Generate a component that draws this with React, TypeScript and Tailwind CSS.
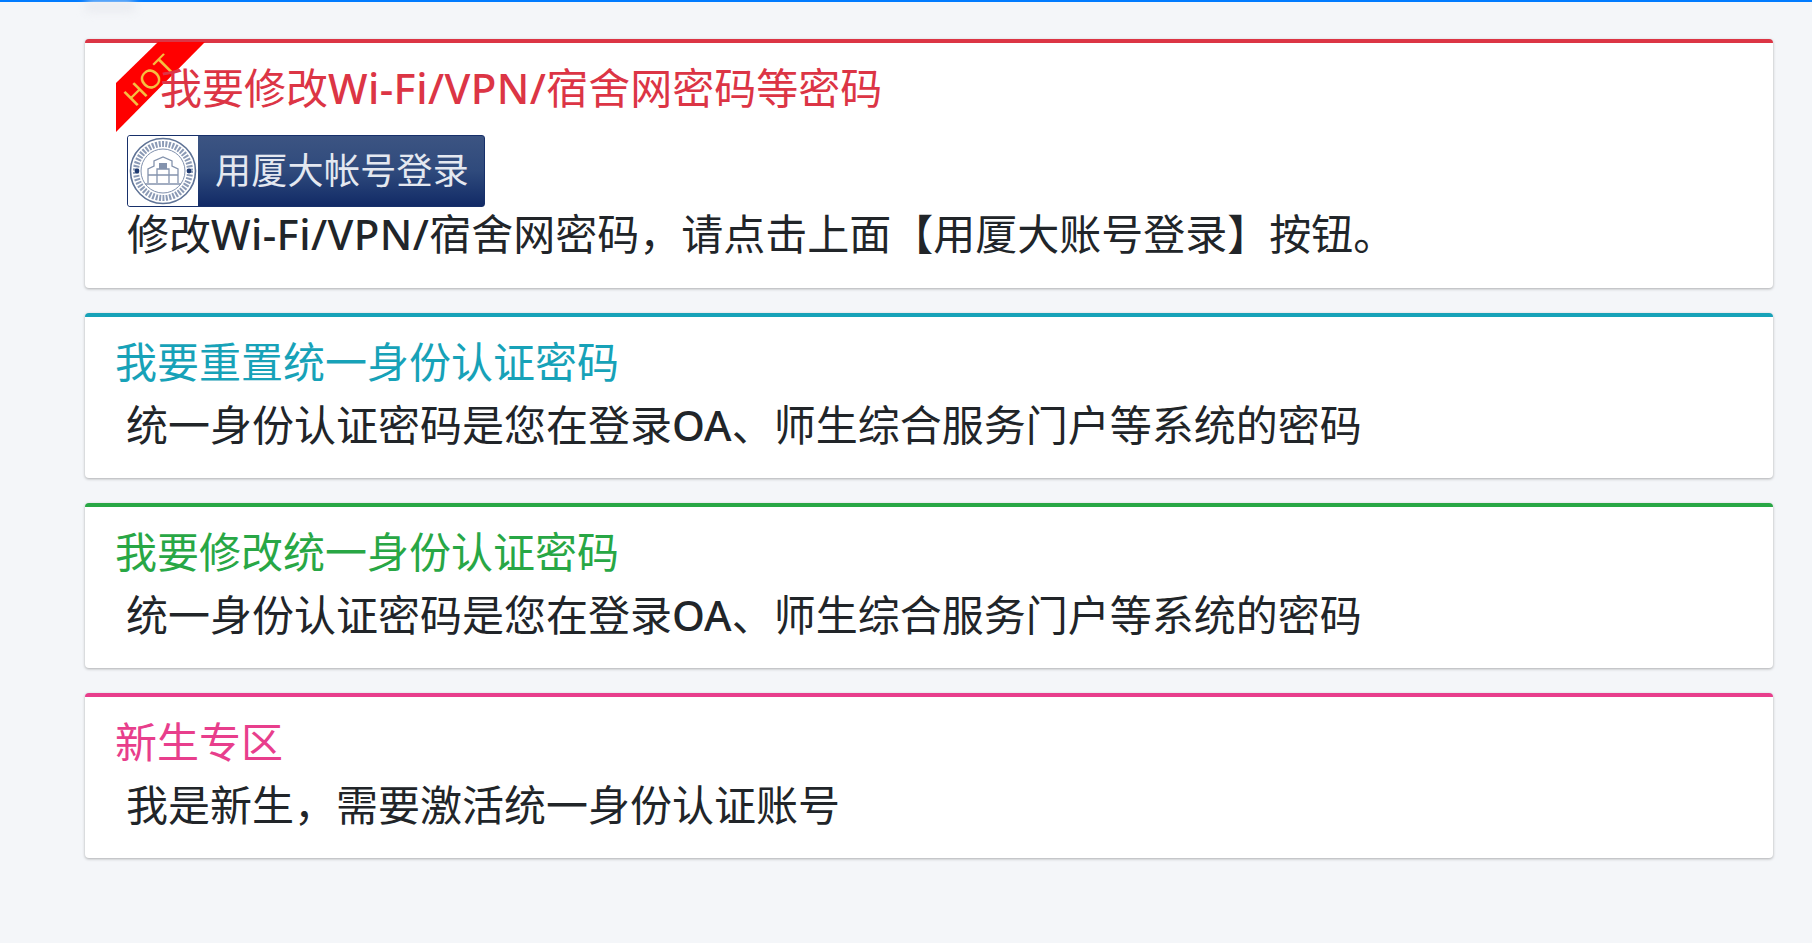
const FONT = "font-['Noto_Sans','Noto_Sans_CJK_SC',sans-serif]";

function HotRibbon() {
  return (
    <div className="absolute left-[31px] top-[-1px] w-[90px] h-[90px]">
      <svg width="90" height="90" viewBox="0 0 90 90" className="absolute left-0 top-0">
        <polygon points="0,90 0,41 42,0 89,0" fill="#ff0000" />
      </svg>
      <span className="absolute left-[2px] top-[26px] w-[64px] text-center text-[27px] leading-[24px] tracking-[1px] text-[#f5bf42] font-['Liberation_Sans',sans-serif] -rotate-45">
        HOT
      </span>
    </div>
  );
}

function Seal() {
  return (
    <svg width="70" height="70" viewBox="0 0 70 70">
      <rect width="70" height="70" fill="#fff" />
      <circle cx="35" cy="35" r="32.5" fill="none" stroke="#5f7396" strokeWidth="1.6" />
      <circle cx="35" cy="35" r="27" fill="none" stroke="#8b9ab5" strokeWidth="6" strokeDasharray="2 1.4" />
      <circle cx="35" cy="35" r="22" fill="none" stroke="#7f90ad" strokeWidth="1" />
      <circle cx="9" cy="35" r="2.4" fill="#1f3a70" />
      <circle cx="61" cy="35" r="2.4" fill="#1f3a70" />
      <path d="M20 47V33l6-3v-5l9-4 9 4v5l6 3v14M29 47V33h12v14M20 39h30M17 48h36" fill="none" stroke="#8493ad" strokeWidth="1.3" />
      <path d="M31 27h8v6h-8z" fill="#8493ad" />
    </svg>
  );
}

function LoginButton() {
  return (
    <div className="flex h-[72px] w-[358px] overflow-hidden rounded-[3px] border border-[#17306a] bg-gradient-to-b from-[#3c5482] via-[#2f4a7c] to-[#122a66]">
      <div className="flex w-[70px] items-center justify-center bg-white rounded-l-[2px]">
        <Seal />
      </div>
      <div className="flex-1 pl-[17px] text-[36px] leading-[70px] tracking-[0.3px] text-[#e4e8f0]">用厦大帐号登录</div>
    </div>
  );
}

function Latin({ children }: { children: string }) {
  return <span className="font-medium tracking-[0.4px]">{children}</span>;
}

type CardProps = {
  title: React.ReactNode;
  topBorder: string;
  titleColor: string;
  desc: React.ReactNode;
  hot?: boolean;
};

function Card({ title, topBorder, titleColor, desc, hot }: CardProps) {
  return (
    <div className={`relative rounded-[4px] border-t-4 bg-white pl-[30px] pr-5 pt-[20px] shadow-[0_1px_3px_rgba(0,0,0,0.3)] ${hot ? "pb-[23px]" : "pb-[22px]"} ${topBorder}`}>
      {hot && <HotRibbon />}
      <h3 className={`h-[50px] text-[42px] leading-[50px] font-normal mb-[6px] ${titleColor} ${hot ? "relative ml-[45px]" : ""}`}>
        {title}
      </h3>
      {hot && (
        <div className="h-[83px] pt-[16px] pl-[12px]">
          <LoginButton />
        </div>
      )}
      <p className={`text-[42px] leading-[63px] text-[#212529] ${hot ? "pl-[12px]" : "pl-[11px]"}`}>{desc}</p>
    </div>
  );
}

export default function App() {
  return (
    <div className={`relative min-h-[943px] bg-[#f4f6f9] border-t-2 border-[#007bff] pl-[85px] pr-[39px] pt-[37px] ${FONT}`}>
      <div className="absolute left-[85px] top-0 h-[10px] w-[50px] rounded-full bg-[#e9ebf0] blur-[4px]" />
      <div className="flex flex-col gap-[25px]">
        <Card
          hot
          title={<>我要修改<Latin>Wi-Fi/VPN/</Latin>宿舍网密码等密码</>}
          topBorder="border-[#dc3545]"
          titleColor="text-[#dc3545]"
          desc={<>修改<Latin>Wi-Fi/VPN/</Latin>宿舍网密码，请点击上面【用厦大账号登录】按钮。</>}
        />
        <Card
          title="我要重置统一身份认证密码"
          topBorder="border-[#17a2b8]"
          titleColor="text-[#17a2b8]"
          desc={<>统一身份认证密码是您在登录<span className="font-medium">OA</span>、师生综合服务门户等系统的密码</>}
        />
        <Card
          title="我要修改统一身份认证密码"
          topBorder="border-[#28a745]"
          titleColor="text-[#28a745]"
          desc={<>统一身份认证密码是您在登录<span className="font-medium">OA</span>、师生综合服务门户等系统的密码</>}
        />
        <Card
          title="新生专区"
          topBorder="border-[#e83e8c]"
          titleColor="text-[#e83e8c]"
          desc="我是新生，需要激活统一身份认证账号"
        />
      </div>
    </div>
  );
}
